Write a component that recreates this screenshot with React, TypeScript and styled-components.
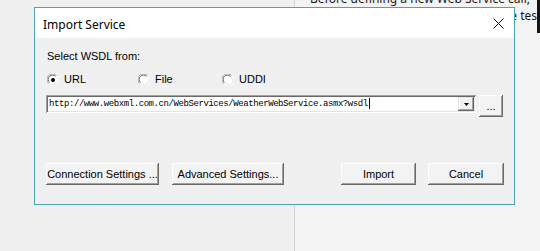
import React from 'react';
import styled, { createGlobalStyle } from 'styled-components';

const Global = createGlobalStyle`
  html, body { margin: 0; padding: 0; background: #f0f0f0; }
  body { width: 540px; height: 251px; overflow: hidden; font-family: "Liberation Sans", Arial, sans-serif; }
`;

const Screen = styled.div`
  position: relative;
  width: 540px;
  height: 251px;
  display: grid;
  grid-template-columns: 294px 1px 1fr;
  background: #f0f0f0;
  overflow: hidden;
`;

const LeftPane = styled.div`
  background: #f0f0f0;
`;

const Divider = styled.div`
  background: #d4d4d4;
`;

const RightPane = styled.div`
  display: flex;
  min-width: 0;
  background: #f3f3f3;
`;

const DocText = styled.div`
  flex: 1;
  min-width: 0;
  overflow: hidden;
  padding-left: 15px;
  margin-top: -10px;
  font-family: "Noto Sans", sans-serif;
  font-size: 12px;
  line-height: 17px;
  color: #1a1a1a;
  white-space: nowrap;
`;

const DocLine = styled.div<{ $align?: string }>`
  text-align: ${(p) => p.$align || 'left'};
`;

const EdgeBar = styled.div`
  width: 3px;
  height: 33px;
  background: #141414;
`;

const Dialog = styled.div`
  position: absolute;
  left: 34px;
  top: 7px;
  width: 479px;
  height: 196px;
  border: 1px solid #4da2b4;
  background: #f0f0f0;
  display: flex;
  flex-direction: column;
`;

const TitleBar = styled.div`
  height: 30px;
  flex: none;
  background: #ffffff;
  display: flex;
  align-items: center;
  justify-content: space-between;
  padding: 0 10px 0 8px;
`;

const Title = styled.span`
  font-family: "Noto Sans", sans-serif;
  font-size: 12px;
  color: #000;
  position: relative;
  top: 1px;
`;

const Body = styled.div`
  flex: 1;
  display: flex;
  flex-direction: column;
  padding: 12px 10px 19px 11px;
  font-size: 11px;
  line-height: 13px;
  color: #000;
`;

const Label = styled.div`
  margin-left: 1px;
`;

const RadioRow = styled.div`
  margin-top: 10px;
  padding-left: 1px;
  display: grid;
  grid-template-columns: 91px 84px auto;
`;

const RadioOption = styled.label`
  display: flex;
  align-items: center;
  gap: 5px;
  height: 13px;
`;

const ComboRow = styled.div`
  margin-top: 9px;
  display: flex;
  align-items: flex-start;
  gap: 3px;
`;

const Combo = styled.div`
  width: 430px;
  height: 18px;
  box-sizing: border-box;
  background: #fff;
  box-shadow: inset 1px 1px 0 #a0a0a0, inset -1px -1px 0 #ffffff, inset 2px 2px 0 #696969, inset -2px -2px 0 #e3e3e3;
  display: flex;
  align-items: center;
  padding: 0 2px 0 3px;
`;

const ComboText = styled.span`
  font-family: "Liberation Mono", "Courier New", monospace;
  font-size: 9px;
  letter-spacing: -0.42px;
  color: #000;
  white-space: nowrap;
`;

const Caret = styled.span`
  display: inline-block;
  width: 1px;
  height: 11px;
  background: #000;
  margin-left: 1px;
  vertical-align: middle;
`;

const DropButton = styled.div`
  margin-left: auto;
  width: 16px;
  height: 14px;
  background: #f0f0f0;
  box-shadow: inset -1px -1px 0 #696969, inset 1px 1px 0 #e3e3e3, inset -2px -2px 0 #a0a0a0, inset 2px 2px 0 #ffffff;
  display: flex;
  align-items: center;
  justify-content: center;
`;

const Button = styled.button<{ $w: number }>`
  width: ${(p) => p.$w}px;
  height: 22px;
  padding: 0;
  border: none;
  background: #f3f3f3;
  box-shadow: inset -1px -1px 0 #696969, inset 1px 1px 0 #ffffff, inset -2px -2px 0 #a0a0a0, inset 2px 2px 0 #f3f3f3;
  font-family: "Liberation Sans", Arial, sans-serif;
  font-size: 11px;
  color: #000;
`;

const ButtonRow = styled.div`
  margin-top: auto;
  display: flex;
  gap: 13px;
`;

const ButtonGroup = styled.div<{ $push?: boolean }>`
  display: flex;
  gap: ${(p) => (p.$push ? 12 : 13)}px;
  margin-left: ${(p) => (p.$push ? 'auto' : '0')};
`;

const Radio = ({ checked }: { checked?: boolean }) => (
  <svg width="12" height="12" viewBox="0 0 12 12">
    <circle cx="6" cy="6" r="5.5" fill="#fff" />
    <path d="M1.5 9.5 A5 5 0 0 1 9.5 1.5" fill="none" stroke="#a0a0a0" strokeWidth="1" />
    <path d="M2.4 8.6 A3.8 3.8 0 0 1 8.6 2.4" fill="none" stroke="#696969" strokeWidth="1" />
    <path d="M10.5 2.5 A5 5 0 0 1 2.5 10.5" fill="none" stroke="#ffffff" strokeWidth="1" />
    <path d="M9.6 3.4 A3.8 3.8 0 0 1 3.4 9.6" fill="none" stroke="#e3e3e3" strokeWidth="1" />
    {checked && <circle cx="6" cy="6" r="2" fill="#000" />}
  </svg>
);

const CloseIcon = () => (
  <svg width="11" height="11" viewBox="0 0 11 11">
    <path d="M0.5 0.5 L10.5 10.5 M10.5 0.5 L0.5 10.5" stroke="#111" strokeWidth="1" />
  </svg>
);

const ArrowDown = () => (
  <svg width="5" height="3" viewBox="0 0 5 3">
    <path d="M0 0 H5 L2.5 3 Z" fill="#000" />
  </svg>
);

export default function App() {
  return (
    <>
      <Global />
      <Screen>
        <LeftPane />
        <Divider />
        <RightPane>
          <DocText>
            <DocLine>Before defining a new Web Service call,</DocLine>
            <DocLine $align="right">import the WSDL first and use the tes</DocLine>
          </DocText>
          <EdgeBar />
        </RightPane>
        <Dialog>
          <TitleBar>
            <Title>Import Service</Title>
            <CloseIcon />
          </TitleBar>
          <Body>
            <Label>Select WSDL from:</Label>
            <RadioRow>
              <RadioOption>
                <Radio checked />
                URL
              </RadioOption>
              <RadioOption>
                <Radio />
                File
              </RadioOption>
              <RadioOption>
                <Radio />
                UDDI
              </RadioOption>
            </RadioRow>
            <ComboRow>
              <Combo>
                <ComboText>
                  http://www.webxml.com.cn/WebServices/WeatherWebService.asmx?wsdl
                  <Caret />
                </ComboText>
                <DropButton>
                  <ArrowDown />
                </DropButton>
              </Combo>
              <Button $w={24}>...</Button>
            </ComboRow>
            <ButtonRow>
              <ButtonGroup>
                <Button $w={113}>Connection Settings ...</Button>
                <Button $w={112}>Advanced Settings...</Button>
              </ButtonGroup>
              <ButtonGroup $push>
                <Button $w={75}>Import</Button>
                <Button $w={76}>Cancel</Button>
              </ButtonGroup>
            </ButtonRow>
          </Body>
        </Dialog>
      </Screen>
    </>
  );
}
